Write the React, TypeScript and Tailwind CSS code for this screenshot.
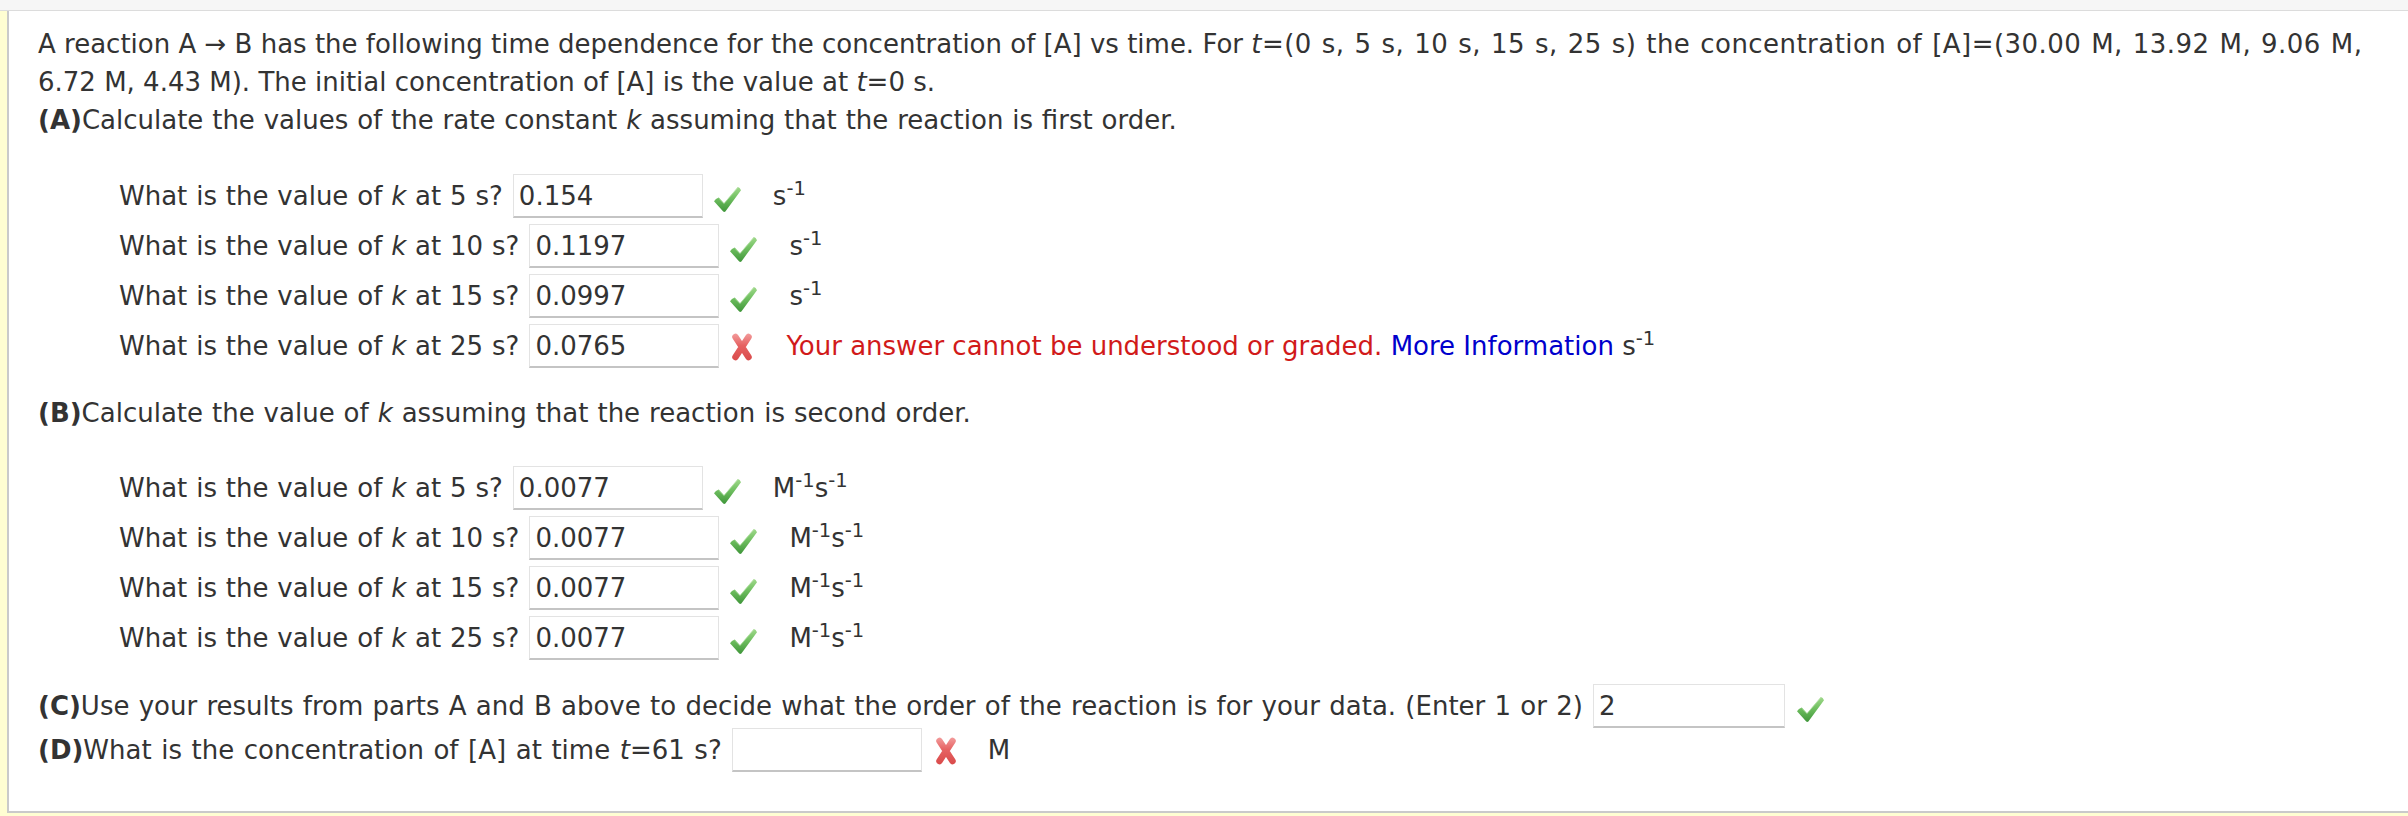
import React from "react";

const Check = ({ className = "" }: { className?: string }) => (
  <svg width="30" height="28" viewBox="0 0 30 28" className={"shrink-0 " + className}>
    <defs>
      <linearGradient id="cg" x1="0" y1="0" x2="0" y2="28" gradientUnits="userSpaceOnUse">
        <stop offset="0" stopColor="#a9dd93" />
        <stop offset="0.45" stopColor="#72c162" />
        <stop offset="1" stopColor="#3c9337" />
      </linearGradient>
    </defs>
    <path
      d="M2 16.2 Q3.5 13.6 6.8 12.6 L12 18.2 L25.8 2 Q28 2.6 29 5.2 L13.4 26.4 Q12.2 27.4 11 26.3 Z"
      fill="url(#cg)"
    />
    <path d="M7 13.4 L12 18.6 L25.6 2.8" stroke="#c9ecbd" strokeWidth="0.8" fill="none" opacity="0.7" />
  </svg>
);

const XMark = ({ className = "" }: { className?: string }) => (
  <svg width="30" height="30" viewBox="0 0 30 30" className={"shrink-0 " + className}>
    <defs>
      <linearGradient id="xg" x1="0" y1="0" x2="0" y2="30" gradientUnits="userSpaceOnUse">
        <stop offset="0" stopColor="#f4a3a3" />
        <stop offset="0.45" stopColor="#e66262" />
        <stop offset="1" stopColor="#d84848" />
      </linearGradient>
    </defs>
    <path
      d="M8.5 5 L21.5 25 M21.5 5 L8.5 25"
      stroke="url(#xg)"
      strokeWidth="6.5"
      strokeLinecap="round"
      fill="none"
    />
  </svg>
);

const inputCls =
  "h-[44px] bg-white border border-[#e3e3e3] border-b-2 border-b-[#c4c4c4] pl-[5px] text-[#333] outline-none shrink-0 [word-spacing:0px]";

type RowProps = {
  t: string;
  v: string;
  ok: boolean;
  unit: React.ReactNode;
  error?: boolean;
};

function Row({ t, v, ok, unit, error }: RowProps) {
  return (
    <div className="flex items-center h-[50px] whitespace-nowrap [word-spacing:0.6px]">
      <span>
        What is the value of <i>k</i> at {t} s?
      </span>
      <input className={inputCls + " ml-[10px] w-[190px]"} value={v} readOnly />
      {ok ? <Check className="ml-[9px] mt-[6px]" /> : <XMark className="ml-[8px] mt-[2px]" />}
      {error ? (
        <span className="ml-[29px] [word-spacing:0px]">
          <span className="text-[#d11a1a]">Your answer cannot be understood or graded.</span>{" "}
          <span className="text-[#0000cc]">More Information</span> s<sup>-1</sup>
        </span>
      ) : (
        <span className="ml-[31px]">{unit}</span>
      )}
    </div>
  );
}

const S1 = (
  <>
    s<sup>-1</sup>
  </>
);
const MS = (
  <>
    M<sup>-1</sup>s<sup>-1</sup>
  </>
);

export default function App() {
  return (
    <div className="min-h-[816px] w-[2408px] bg-[#fffed2] text-[26px] leading-[38px] text-[#333] [font-family:'DejaVu_Sans',Verdana,sans-serif]">
      <div className="h-[11px] bg-[#f6f6f6] border-b border-[#dcdcdc]" />
      <div className="ml-[7px] mb-[3px] bg-white border-l-2 border-b-2 border-[#cacaca] pt-[14px] pl-[29px] pb-[39px]">
        <p className="whitespace-nowrap">
          A reaction A → B has the following time dependence for the concentration of [A] vs time. For{" "}
          <span className="[word-spacing:1.3px] tracking-[0.45px]">
            <i>t</i>=(0 s, 5 s, 10 s, 15 s, 25 s) the concentration of [A]=(30.00 M, 13.92 M, 9.06 M,
          </span>
          <br />
          6.72 M, 4.43 M). The initial concentration of [A] is the value at <i>t</i>=0 s.
          <br />
          <span className="[word-spacing:0.6px]">
            <b>(A)</b>Calculate the values of the rate constant <i>k</i> assuming that the reaction is first order.
          </span>
        </p>

        <div className="mt-[32px] pl-[81px]">
          <Row t="5" v="0.154" ok unit={S1} />
          <Row t="10" v="0.1197" ok unit={S1} />
          <Row t="15" v="0.0997" ok unit={S1} />
          <Row t="25" v="0.0765" ok={false} error unit={S1} />
        </div>

        <p className="mt-[23px] whitespace-nowrap [word-spacing:0.7px]">
          <b>(B)</b>Calculate the value of <i>k</i> assuming that the reaction is second order.
        </p>

        <div className="mt-[31px] pl-[81px]">
          <Row t="5" v="0.0077" ok unit={MS} />
          <Row t="10" v="0.0077" ok unit={MS} />
          <Row t="15" v="0.0077" ok unit={MS} />
          <Row t="25" v="0.0077" ok unit={MS} />
        </div>

        <div className="mt-[21px] flex items-center h-[44px] whitespace-nowrap [word-spacing:1px]">
          <span>
            <b>(C)</b>Use your results from parts A and B above to decide what the order of the reaction is for your
            data. (Enter 1 or 2)
          </span>
          <input className={inputCls + " ml-[10px] w-[192px]"} value="2" readOnly />
          <Check className="ml-[10px] mt-[6px]" />
        </div>
        <div className="flex items-center h-[44px] whitespace-nowrap [word-spacing:1.3px]">
          <span>
            <b>(D)</b>What is the concentration of [A] at time <i>t</i>=61 s?
          </span>
          <input className={inputCls + " ml-[10px] w-[190px]"} value="" readOnly />
          <XMark className="ml-[9px] mt-[2px]" />
          <span className="ml-[27px]">M</span>
        </div>
      </div>
    </div>
  );
}
